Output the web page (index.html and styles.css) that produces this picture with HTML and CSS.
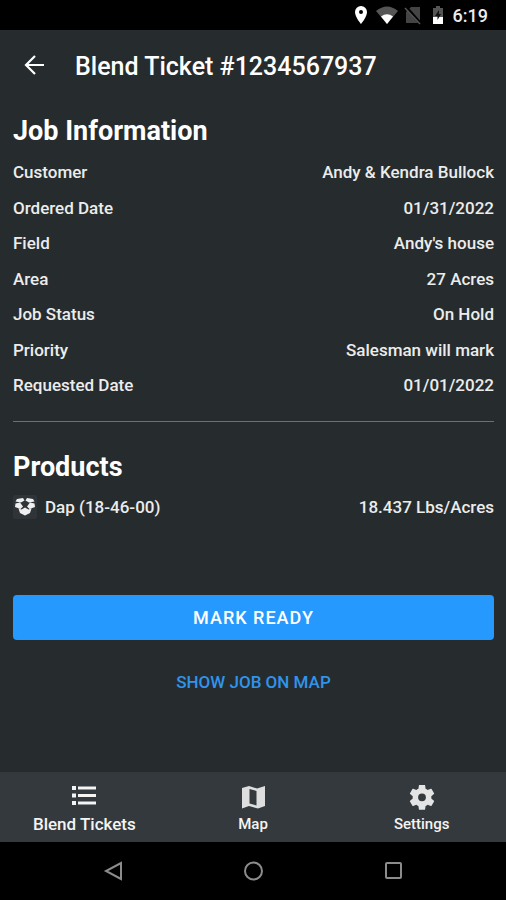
FILE: index.html
```html
<!DOCTYPE html>
<html lang="en">
<head>
  <meta charset="UTF-8" />
  <meta name="viewport" content="width=device-width, initial-scale=1.0"/>
  <title>Blend Ticket #1234567937</title>
  <link rel="stylesheet" href="styles.css">
</head>
<body>
  <div class="status-bar">
    <svg class="status-icon" viewBox="0 0 20 20"><path fill="#fff" fill-rule="evenodd" d="M10 1a6 6 0 0 0-6 6c0 5 6 12 6 12s6-7 6-12a6 6 0 0 0-6-6zm0 4a2 2 0 1 1 0 4 2 2 0 0 1 0-4z"/></svg>
    <svg class="status-icon wifi" viewBox="0 0 22 20"><path fill="#555" d="M0 6Q11-3 22 6L11 19z"/><path fill="#fff" d="M5 11.500Q11 7 17 11.500L11 19z"/></svg>
    <svg class="status-icon" viewBox="0 0 20 20"><path fill="#444" d="M8 2h9v16H3V7z"/><path stroke="#000" stroke-width="3" d="M3 2l15 17"/><path stroke="#555" stroke-width="1.500" d="M2 3l15 16"/></svg>
    <svg class="status-icon battery" viewBox="0 0 12 20"><path fill="#555" d="M4 1h4v2h3v9H1V3h3z"/><path fill="#fff" d="M1 12h10v7H1z"/><path fill="#111" d="M7 5l-4 6h2.500v4L9 9H7z"/></svg>
    <span class="clock">6:19</span>
  </div>

  <header class="header">
    <button class="back" aria-label="Back">
      <svg viewBox="0 0 24 24"><path fill="none" stroke="#fff" stroke-width="2.200" d="M21 11H3M12 2L3 11l9 9"/></svg>
    </button>
    <h1>Blend Ticket #1234567937</h1>
  </header>

  <main class="content">
    <h2>Job Information</h2>
    <dl class="details">
      <div class="row"><dt>Customer</dt><dd>Andy &amp; Kendra Bullock</dd></div>
      <div class="row"><dt>Ordered Date</dt><dd>01/31/2022</dd></div>
      <div class="row"><dt>Field</dt><dd>Andy's house</dd></div>
      <div class="row"><dt>Area</dt><dd>27 Acres</dd></div>
      <div class="row"><dt>Job Status</dt><dd>On Hold</dd></div>
      <div class="row"><dt>Priority</dt><dd>Salesman will mark</dd></div>
      <div class="row"><dt>Requested Date</dt><dd>01/01/2022</dd></div>
    </dl>

    <hr>

    <h2>Products</h2>
    <div class="row product">
      <span class="product-name">
        <svg class="product-icon" viewBox="0 0 24 24"><rect width="24" height="24" rx="2" fill="#2f3438"/><path fill="#f0f0f0" d="M4 4l6-1 1.500 2.500L8 7.500 2.500 6.500zM20 4l-6-1-1.500 2.500L16 7.500l5.500-1zM2.500 8.500L7 7.500l3 4-2.500 2.500L2 12zM21.500 8.500L17 7.500l-3 4 2.500 2.500L22 12zM5.500 13.500l3 1L12 12.500l3.500 2 3-1-1.500 4.500-5 2.500L7 18z"/></svg>
        Dap (18-46-00)
      </span>
      <span>18.437 Lbs/Acres</span>
    </div>

    <button class="btn-ready">MARK READY</button>
    <button class="btn-map">SHOW JOB ON MAP</button>
  </main>

  <nav class="tabs">
    <a href="#" class="tab active">
      <svg viewBox="0 0 26 26"><path fill="#f4f4f4" d="M1 1h4v4H1zM7 1.500h18v3H7zM1 8.500h4v4H1zM7 9h18v3H7zM1 16h4v4H1zM7 16.500h18v3H7z"/></svg>
      Blend Tickets
    </a>
    <a href="#" class="tab">
      <svg viewBox="0 0 26 26"><path fill="#dedede" fill-rule="evenodd" d="M2 3l7-2 8 2.500L25 1v20l-7 2.500L9 21l-7 2.500zM9.500 4v14.500l7 2V6z"/></svg>
      Map
    </a>
    <a href="#" class="tab">
      <svg viewBox="2 2.500 20 20"><path fill="#e4e4e4" d="M19.140 12.940c.04-.3.060-.61.060-.94s-.02-.64-.07-.94l2.030-1.580c.18-.14.230-.41.120-.61l-1.920-3.320c-.12-.22-.37-.29-.59-.22l-2.390.960c-.5-.38-1.030-.7-1.620-.94L14.400 2.810c-.04-.24-.24-.41-.48-.41h-3.840c-.24 0-.43.170-.47.410L9.250 5.350c-.59.240-1.130.570-1.620.940l-2.390-.96c-.22-.08-.47 0-.59.220L2.740 8.870c-.12.210-.08.470.120.610l2.030 1.580c-.05.300-.09.630-.09.940s.02.640.070.940l-2.030 1.580c-.18.140-.23.410-.12.610l1.920 3.320c.12.220.370.290.590.220l2.390-.96c.5.380 1.030.7 1.620.940l.36 2.540c.05.240.240.410.480.410h3.840c.24 0 .44-.17.470-.41l.36-2.540c.59-.24 1.130-.56 1.620-.94l2.390.960c.22.080.470 0 .59-.22l1.920-3.320c.12-.22.070-.47-.12-.61zM12 15a3 3 0 1 1 0-6 3 3 0 0 1 0 6z"/></svg>
      Settings
    </a>
  </nav>

  <div class="system-nav">
    <button aria-label="System back"><svg viewBox="0 0 20 20"><path d="M18 2v16L3 10z"/></svg></button>
    <button aria-label="Home"><svg viewBox="0 0 20 20"><circle cx="10.500" cy="10" r="8.500"/></svg></button>
    <button aria-label="Recent apps"><svg viewBox="0 0 20 20"><rect x="3" y="2" width="15" height="15" rx="1"/></svg></button>
  </div>
</body>
</html>
```

FILE: styles.css
```css
* {
  box-sizing: border-box;
}

body {
  margin: 0;
  min-height: 100vh;
  display: flex;
  flex-direction: column;
  background: #262c2e;
  color: #ececec;
  font-family: Roboto, sans-serif;
  font-size: 17px;
  font-weight: 500;
}

button {
  padding: 0;
  border: 0;
  background: none;
  font-family: inherit;
  cursor: pointer;
}

svg {
  display: block;
}

/* Android status bar */
.status-bar {
  display: flex;
  align-items: center;
  justify-content: flex-end;
  gap: 5px;
  height: 30px;
  padding-right: 18px;
  background: #000;
}

.status-icon {
  width: 20px;
  height: 20px;
}

.battery {
  width: 12px;
  margin: 0 4px;
}

.wifi {
  width: 22px;
}

.clock {
  font-size: 18px;
}

.header {
  display: flex;
  align-items: center;
  gap: 28px;
  height: 70px;
  padding: 2px 23px 0;
}

.back svg {
  width: 24px;
  height: 24px;
}

h1 {
  margin: 0;
  font-size: 25px;
  font-weight: 500;
  color: #fff;
}

.content {
  flex: 1;
  padding: 14px 12px 0 13px;
}

h2 {
  margin: 0;
  font-size: 27px;
  line-height: 34px;
  font-weight: 700;
  color: #fff;
}

.details {
  display: flex;
  flex-direction: column;
  justify-content: space-between;
  min-height: 235px;
  margin: 13px 0 25px;
}

.row {
  display: flex;
  align-items: center;
  justify-content: space-between;
  line-height: 22px;
}

dd {
  margin: 0;
}

hr {
  margin: 0 0 28px;
  border: 0;
  border-top: 1px solid #6c7072;
}

.product {
  margin: 11px 0 76px;
}

.product-name {
  display: flex;
  align-items: center;
  gap: 8px;
}

.product-icon {
  width: 24px;
  height: 24px;
}

.btn-ready,
.btn-map {
  display: block;
  width: 100%;
  height: 45px;
  border-radius: 4px;
  font-size: 17px;
  font-weight: 500;
}

.btn-ready {
  margin-bottom: 19px;
  background: #2699ff;
  color: #fff;
  font-size: 18px;
  letter-spacing: 1px;
}

.btn-map {
  color: #3094ee;
}

.tabs {
  display: flex;
  height: 70px;
  background: #33393c;
}

.tab {
  flex: 1;
  display: flex;
  flex-direction: column;
  align-items: center;
  padding-top: 13px;
  color: #f4f4f4;
  font-size: 15px;
  line-height: 26px;
  text-decoration: none;
}

.tab svg {
  width: 26px;
  height: 26px;
}

.tab.active {
  font-size: 17px;
}

.system-nav {
  display: flex;
  align-items: center;
  justify-content: space-around;
  height: 58px;
  padding: 0 43px;
  background: #000;
}

.system-nav svg {
  width: 20px;
  height: 20px;
  fill: none;
  stroke: #8c8c8c;
  stroke-width: 2;
}
```
